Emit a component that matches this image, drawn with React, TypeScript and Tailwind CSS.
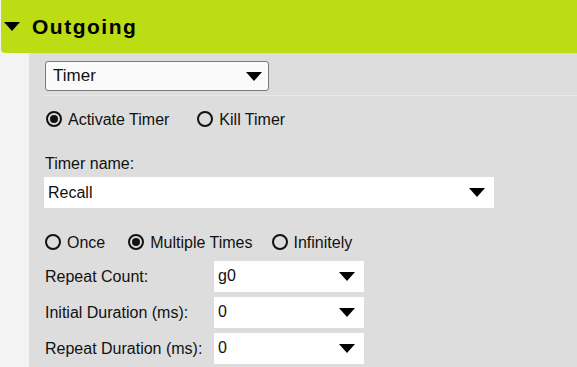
import React from "react";

const Caret = ({ className = "" }: { className?: string }) => (
  <svg width="16" height="9" viewBox="0 0 16 9" className={className}>
    <path d="M0 0 H16 L8 9 Z" fill="#000" />
  </svg>
);

const Radio = ({ checked, label, className = "" }: { checked?: boolean; label: string; className?: string }) => (
  <label className={`flex items-center gap-[6px] ${className}`}>
    <span className="w-[16px] h-[16px] rounded-full border-2 border-[#111] flex items-center justify-center">
      {checked && <span className="w-[8px] h-[8px] rounded-full bg-[#111]"></span>}
    </span>
    <span className="pt-[1px]">{label}</span>
  </label>
);

const FieldSelect = ({ value, width }: { value: string; width: string }) => (
  <div className={`${width} h-[31px] bg-white flex items-center justify-between pl-[4px] pr-[9px]`}>
    <span>{value}</span>
    <Caret />
  </div>
);

const App = () => {
  const rows = [
    { label: "Repeat Count:", value: "g0" },
    { label: "Initial Duration (ms):", value: "0" },
    { label: "Repeat Duration (ms):", value: "0" },
  ];

  return (
    <div
      className="w-[577px] h-[367px] bg-[#f3f3f3] overflow-hidden text-[16px] leading-[20px] text-[#111]"
      style={{ fontFamily: '"Liberation Sans", Arial, sans-serif' }}
    >
      {/* Section header */}
      <div className="ml-[1px] h-[53px] bg-[#bcdc14] rounded-bl-[4px] flex items-center gap-[12px] pl-[3px]">
        <Caret />
        <h2 className="text-[21px] font-bold tracking-[1.5px] text-black">Outgoing</h2>
      </div>

      {/* Body */}
      <div className="ml-[29px] h-[314px] bg-[#dddddd] pl-[15px]">
        <div className="pt-[8px] pb-[4px] border-b border-[#e9e9e9]">
          <div className="ml-[1px] w-[224px] h-[30px] bg-[#fafafa] border border-[#7a7a7a] rounded-[3px] flex items-center justify-between pl-[7px] pr-[6px] text-[17px]">
            <span>Timer</span>
            <Caret />
          </div>
        </div>

        <div className="h-[20px] flex items-center mt-[13px] pl-[2px]">
          <Radio checked label="Activate Timer" />
          <Radio label="Kill Timer" className="ml-[28px]" />
        </div>

        <div className="h-[20px] mt-[24px] pl-[1px] pt-[1px]">Timer name:</div>
        <div className="mt-[4px]">
          <FieldSelect value="Recall" width="w-[450px]" />
        </div>

        <div className="h-[20px] flex items-center mt-[24px] pl-[1px]">
          <Radio label="Once" />
          <Radio checked label="Multiple Times" className="ml-[23px]" />
          <Radio label="Infinitely" className="ml-[19px]" />
        </div>

        <div className="mt-[9px] flex flex-col gap-[6px]">
          {rows.map((row, i) => (
            <div key={i} className="h-[30px] flex items-center">
              <span className="w-[170px] pl-[1px] pt-[1px]">{row.label}</span>
              <FieldSelect value={row.value} width="w-[150px] h-[30px]" />
            </div>
          ))}
        </div>
      </div>
    </div>
  );
};

export default App;
